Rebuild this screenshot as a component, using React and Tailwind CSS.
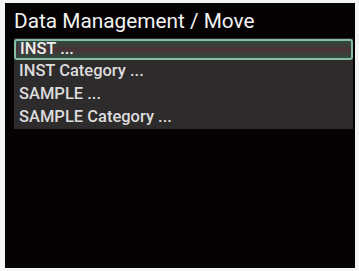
export default function App() {
  const rows = ["INST Category ...", "SAMPLE ...", "SAMPLE Category ..."];
  return (
    <div className="w-[359px] h-[271px] bg-[#f4f4f4] pt-[3px] pl-[5px]" style={{ fontFamily: "Roboto, 'Noto Sans', sans-serif" }}>
      <div className="w-[350px] h-[265px] bg-[#040203] flex flex-col pl-[9px] pr-[3px]">
        <div className="h-[35px] flex items-center pt-[1px] text-[20.8px] text-[#f2f2f2] leading-none">Data Management / Move</div>
        <div className="bg-[#2e2b2c] flex flex-col w-[339px]">
          <div className="h-[21px] mt-[1px] border-2 border-[#86bda3] rounded-[3px] bg-[linear-gradient(to_bottom,#2e4a40,#4a3337_50%,#2e4a40)] flex items-center pl-[4px] text-[16.5px] font-medium text-[#eef0ee] leading-none">INST ...</div>
          {rows.map((r) => (
            <div key={r} className="h-[23px] flex items-center pl-[5px] text-[16.5px] font-medium text-[#dcdcdc] leading-none">{r}</div>
          ))}
        </div>
      </div>
    </div>
  );
}
